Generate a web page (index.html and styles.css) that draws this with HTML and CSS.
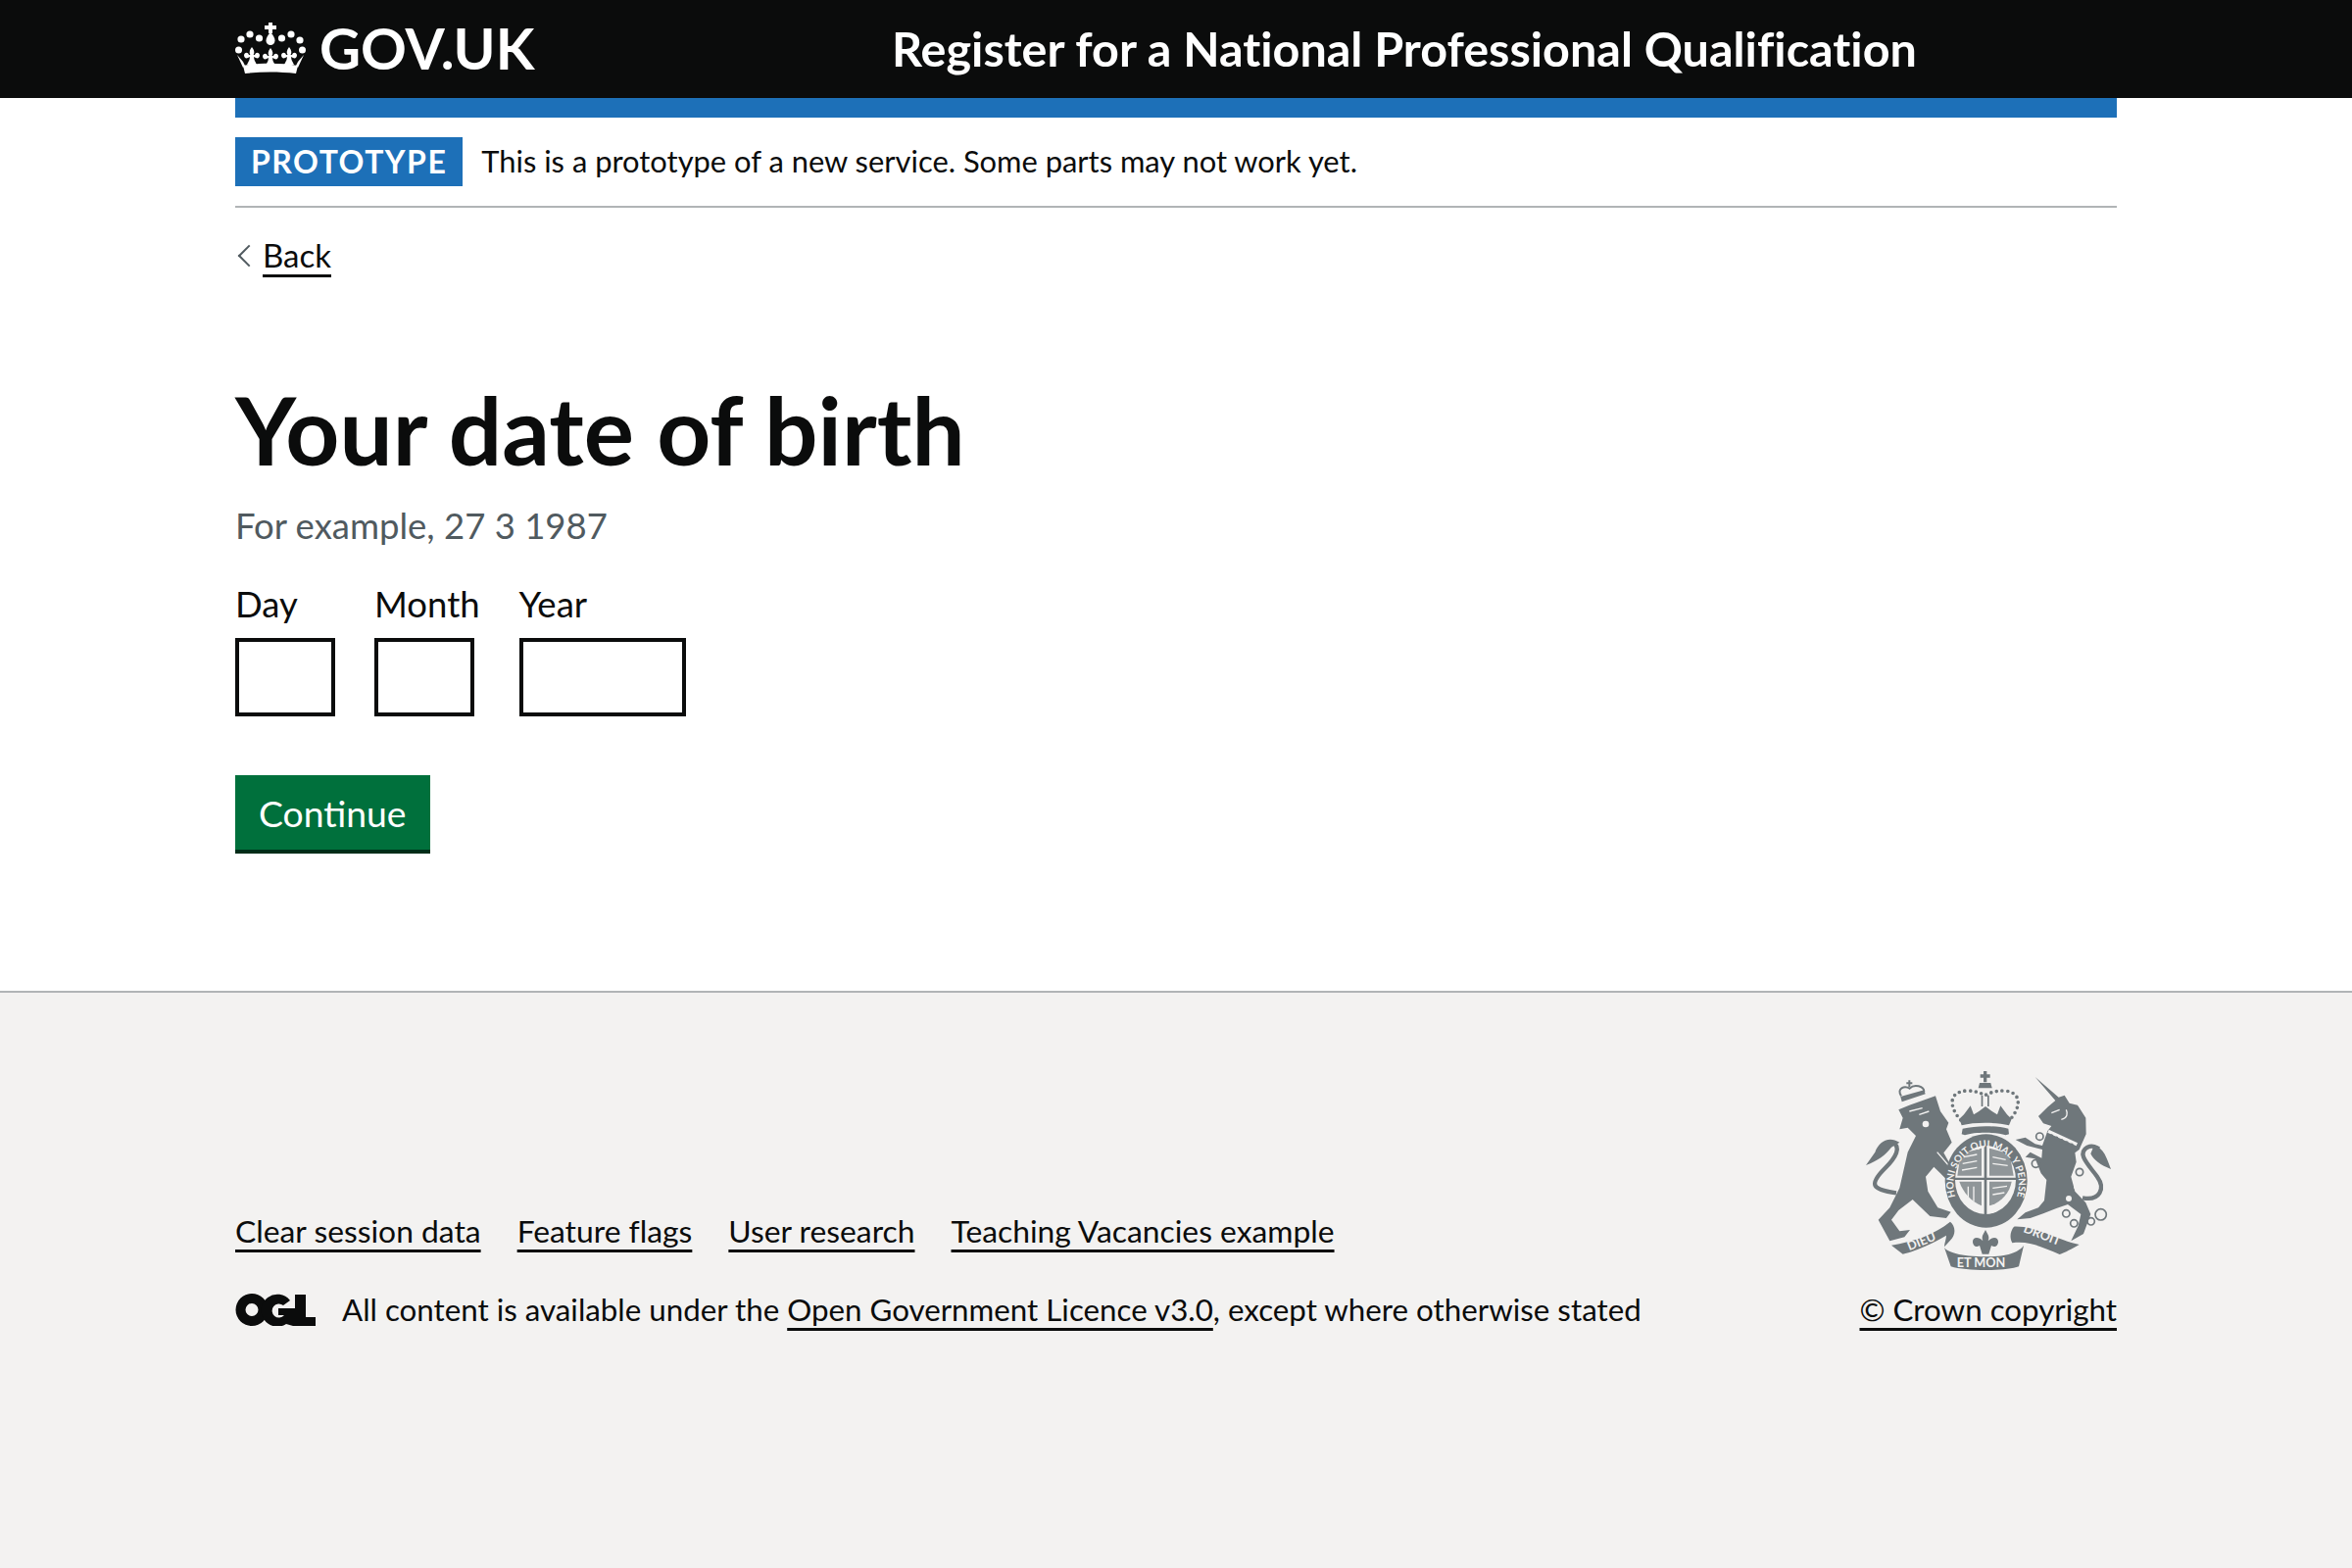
FILE: index.html
```html
<!DOCTYPE html>
<html lang="en">
<head>
    <meta charset="UTF-8">
    <meta name="viewport" content="width=device-width, initial-scale=1.0">
    <title>Your date of birth - Register for a National Professional Qualification</title>
    <link rel="stylesheet" href="styles.css">
</head>
<body>
    <header class="site-header">
        <div class="container header-inner">
            <a class="logo" href="#">
                <svg class="crown" viewBox="0 0 72 52" aria-hidden="true">
                    <path d="M34 0h4v3h4v4h-4v4h-4V7h-4V3h4z"/>
                    <path d="M36 10c3 3 4.500 6 4.500 8.500a4.500 4.500 0 0 1-9 0c0-2.500 1.500-5.500 4.500-8.500z"/>
                    <circle cx="6" cy="17" r="3.600"/><circle cx="15" cy="12" r="3.600"/><circle cx="24.500" cy="16" r="3.600"/>
                    <circle cx="47.500" cy="16" r="3.600"/><circle cx="57" cy="12" r="3.600"/><circle cx="66" cy="18" r="3.600"/>
                    <circle cx="3.500" cy="28" r="3.500"/><circle cx="68.500" cy="28" r="3.500"/>
                    <path transform="translate(17 34)" d="M0-9C2.500-6 3-3 1.500-1L3-1C4-4 7-4 8-1C8 2 6 3 4 2L2 1L2.500 4L5 9H-5L-2.500 4L-2 1L-4 2C-6 3-8 2-8-1C-7-4-4-4-3-1L-1.500-1C-3-3-2.500-6 0-9Z"/>
                    <path transform="translate(36 35)" d="M0-9C2.500-6 3-3 1.500-1L3-1C4-4 7-4 8-1C8 2 6 3 4 2L2 1L2.500 4L5 9H-5L-2.500 4L-2 1L-4 2C-6 3-8 2-8-1C-7-4-4-4-3-1L-1.500-1C-3-3-2.500-6 0-9Z"/>
                    <path transform="translate(55 34)" d="M0-9C2.500-6 3-3 1.500-1L3-1C4-4 7-4 8-1C8 2 6 3 4 2L2 1L2.500 4L5 9H-5L-2.500 4L-2 1L-4 2C-6 3-8 2-8-1C-7-4-4-4-3-1L-1.500-1C-3-3-2.500-6 0-9Z"/>
                    <path d="M2 33L8 40L10 44L8 46Z"/>
                    <path d="M70 33L64 40L62 44L64 46Z"/>
                    <path d="M8 44C25 41 47 41 64 44L62 52C45 50 27 50 10 52Z"/>
                </svg>
                <span>GOV.UK</span>
            </a>
            <a class="service-name" href="#">Register for a National Professional Qualification</a>
        </div>
    </header>

    <div class="container">
        <div class="header-stripe"></div>
        <div class="phase-banner">
            <strong class="tag">PROTOTYPE</strong>
            <span>This is a prototype of a new service. Some parts may not work yet.</span>
        </div>
        <a class="back-link" href="#">Back</a>

        <main class="main">
            <form>
                <h1>Your date of birth</h1>
                <div class="hint">For example, 27 3 1987</div>
                <div class="date-input">
                    <div class="date-item">
                        <label for="dob-day">Day</label>
                        <input class="input-2" type="text" id="dob-day" name="dob-day">
                    </div>
                    <div class="date-item">
                        <label for="dob-month">Month</label>
                        <input class="input-2" type="text" id="dob-month" name="dob-month">
                    </div>
                    <div class="date-item">
                        <label for="dob-year">Year</label>
                        <input class="input-4" type="text" id="dob-year" name="dob-year">
                    </div>
                </div>
                <button class="button" type="submit">Continue</button>
            </form>
        </main>
    </div>

    <footer class="footer">
        <div class="container footer-inner">
            <div class="footer-meta">
                <ul class="footer-links">
                    <li><a href="#">Clear session data</a></li>
                    <li><a href="#">Feature flags</a></li>
                    <li><a href="#">User research</a></li>
                    <li><a href="#">Teaching Vacancies example</a></li>
                </ul>
                <div class="licence">
                    <svg class="ogl" viewBox="0 0 82 33" aria-hidden="true">
                        <path fill-rule="evenodd" d="M17 0a16.500 16.500 0 1 1 0 33a16.500 16.500 0 0 1 0-33zM17 10a6.500 6.500 0 1 0 0 13a6.500 6.500 0 0 0 0-13z"/>
                        <path d="M56 7A16.500 16.500 0 1 0 52 31L59 33H61V15H44V22H50A7 7 0 1 1 49 12Z"/>
                        <path d="M61 1H72V24H82V33H61Z"/>
                    </svg>
                    <span>All content is available under the <a href="#">Open Government Licence v3.0</a>, except where otherwise stated</span>
                </div>
            </div>
            <div class="copyright">
                <svg class="crest" viewBox="60 60 780 630" aria-hidden="true">
                    <!-- lion -->
                    <path d="M172 190L205 176L285 148L300 195L325 230L318 250L335 290L310 322L345 385L345 420L325 410L300 385L280 365L255 395L262 440L292 490L332 503L318 522L268 516L215 465L172 498L150 527L175 562L207 558L190 580L145 592L110 527L145 490L175 430L200 320L225 270L200 245L175 250L185 215Z"/>
                    <path class="crest-line" d="M165 445C90 435 80 420 130 370C165 335 180 305 155 290"/>
                    <path d="M175 290C140 268 110 290 100 320L72 360C110 345 130 330 150 305Z"/>
                    <path class="crest-bg-line" d="M205 195L245 185M235 205L265 195M290 320L340 378"/>
                    <circle class="crest-cut" cx="255" cy="234" r="10"/>
                    <!-- lion crown -->
                    <path class="crest-thin" d="M180 148C165 125 190 115 206 125C220 110 250 118 250 135"/>
                    <path d="M178 150L250 130L254 142L182 166Z"/>
                    <path d="M202 100h6v6h6v6h-6v8h-6v-8h-6v-6h6z"/>
                    <!-- royal crown -->
                    <path d="M432 72h10v10h10v10h-10v14h-10V92h-10V82h10z"/>
                    <path d="M420 108h34l4 16h-42z"/>
                    <path class="crest-dots" d="M362 222C325 180 325 135 380 132c30 0 45 8 57 14c12-6 27-14 57-14c55 3 55 48 18 90"/>
                    <path d="M358 218L372 205L392 178L402 205L418 195L438 180L458 195L474 205L484 178L504 205L518 218L510 238C470 228 405 228 365 238Z"/>
                    <path d="M368 248C410 238 468 238 508 248L510 265L500 268C470 258 405 258 375 268L365 265Z"/>
                    <rect x="425" y="146" width="5" height="34"/><rect x="444" y="146" width="5" height="34"/>
                    <!-- shield and garter -->
                    <ellipse cx="440" cy="408" rx="126" ry="143"/>
                    <ellipse class="crest-bg" cx="438" cy="405" rx="93" ry="105"/>
                    <path d="M345 398H532V405H345Z"/>
                    <path d="M434 300H442V510H434Z"/>
                    <g class="crest-quarters">
                        <path d="M362 325L426 308V392H352Z"/>
                        <path d="M450 308L512 325L524 392H450Z"/>
                        <path d="M358 410H426V484C395 470 370 445 358 410Z"/>
                        <path d="M450 410H518C512 445 485 475 450 484Z"/>
                    </g>
                    <path class="crest-bg-line" d="M372 335L412 327M368 355L412 347M366 375L412 367M460 335L500 343M460 355L506 361M460 430L504 424M460 450L496 444M385 425V460M402 425V470"/>
                    <path id="garter-arc" class="crest-none" d="M368 495A100 112 0 1 1 512 495"/>
                    <text class="crest-text garter-text"><textPath href="#garter-arc" startOffset="50%">HONI SOIT QUI MAL Y PENSE</textPath></text>
                    <!-- unicorn -->
                    <path d="M590 90L662 152L680 146L695 170L720 176L745 215L746 265L725 312L712 322L716 350L700 395L712 440L745 475L760 510L738 570L700 592L722 545L730 510L690 480L655 492L615 508L575 522L535 526L560 505L600 490L618 468L625 405L608 385L590 340L560 335L575 320L610 338L612 312L565 300L530 282L560 275L590 295L612 300L628 255L640 240L615 232L600 210L628 182L652 162Z"/>
                    <path class="crest-band" d="M630 256L718 296"/>
                    <path class="crest-dots" d="M640 270L710 302"/>
                    <path class="crest-bg-line" d="M640 200L665 190M670 220C690 215 690 200 685 190"/>
                    <path class="crest-line" d="M735 460C790 470 805 430 780 395C755 360 715 325 750 305C765 298 780 305 785 310"/>
                    <path d="M770 300C800 305 810 340 822 372C790 360 770 345 760 325Z"/>
                    <circle class="crest-ring" cx="604" cy="272" r="11"/><circle class="crest-ring" cx="592" cy="355" r="12"/>
                    <circle class="crest-ring" cx="726" cy="381" r="11"/><circle class="crest-cut" cx="717" cy="425" r="9"/><circle class="crest-cut" cx="693" cy="462" r="9"/>
                    <circle class="crest-ring" cx="685" cy="508" r="11"/><circle class="crest-ring" cx="709" cy="538" r="11"/><circle class="crest-ring" cx="761" cy="532" r="11"/><circle class="crest-ring" cx="791" cy="511" r="17"/>
                    <!-- motto scroll -->
                    <path d="M150 605C215 595 285 570 330 533C345 545 350 570 330 590L312 610C312 600 318 585 318 575C275 600 220 625 185 632Z"/>
                    <path d="M525 548C590 545 660 590 725 603C705 615 680 628 665 633C620 615 575 590 520 598C510 580 515 560 525 548Z"/>
                    <path d="M312 612C320 625 360 640 440 640C510 640 540 625 555 606L540 670C500 685 380 685 332 670Z"/>
                    <path d="M438 558C444 572 452 576 446 592C460 576 482 580 476 600C472 612 462 610 456 606L448 632H428L420 606C414 610 404 612 400 600C394 580 416 576 430 592C424 576 432 572 438 558Z"/>
                    <text class="crest-text motto" x="205" y="622" transform="rotate(-22 205 622)">DIEU</text>
                    <text class="crest-text motto" x="350" y="672">ET MON</text>
                    <text class="crest-text motto" x="552" y="564" transform="rotate(21 552 564)">DROIT</text>
                </svg>
                <a href="#">© Crown copyright</a>
            </div>
        </div>
    </footer>
</body>
</html>
```

FILE: styles.css
```css
html, body {
    margin: 0;
    padding: 0;
}

body {
    display: flex;
    flex-direction: column;
    min-height: 100vh;
    font-family: Lato, "Noto Sans", Arial, sans-serif;
    font-size: 36px;
    line-height: 50px;
    font-variant-ligatures: none;
    color: #0b0c0c;
    background-color: #fff;
}

a {
    color: #0b0c0c;
    text-decoration: underline;
    text-decoration-thickness: 3px;
    text-underline-offset: 7px;
}

.container {
    width: 1920px;
    margin: 0 auto;
}

/* Header */
.site-header {
    height: 100px;
    background-color: #0b0c0c;
}

.header-inner {
    display: flex;
    align-items: center;
    height: 100%;
}

.logo {
    display: flex;
    align-items: center;
    gap: 14px;
    width: 670px;
    margin-bottom: 3px;
    color: #fff;
    font-size: 58px;
    font-weight: 700;
    text-decoration: none;
}

.crown {
    width: 72px;
    height: 52px;
    fill: #fff;
}

.service-name {
    margin-bottom: 3px;
    color: #fff;
    font-size: 48.500px;
    font-weight: 700;
    text-decoration: none;
}

.header-stripe {
    height: 20px;
    background-color: #1d70b8;
}

/* Phase banner */
.phase-banner {
    display: flex;
    align-items: center;
    gap: 19px;
    padding: 20px 0;
    border-bottom: 2px solid #b1b4b6;
    font-size: 30.900px;
}

.tag {
    display: block;
    height: 50px;
    padding: 0 16px;
    line-height: 50px;
    font-size: 32px;
    letter-spacing: 1.500px;
    color: #fff;
    background-color: #1d70b8;
}

.back-link {
    display: inline-block;
    position: relative;
    margin-top: 23px;
    padding-left: 28px;
    font-size: 33px;
}

.back-link::before {
    content: "";
    position: absolute;
    left: 6px;
    top: 18px;
    width: 14px;
    height: 14px;
    border-left: 2px solid #505a5f;
    border-bottom: 2px solid #505a5f;
    transform: rotate(45deg);
}

/* Form */
.main {
    padding-top: 103px;
    padding-bottom: 144px;
}

h1 {
    margin: 0 0 23px;
    font-size: 96px;
    line-height: 100px;
    font-weight: 700;
}

.hint {
    margin-bottom: 30px;
    font-size: 36.500px;
    color: #505a5f;
}

.date-input {
    display: flex;
    gap: 40px;
    margin-bottom: 60px;
}

.date-item label {
    display: block;
    margin-bottom: 10px;
    font-size: 36.500px;
}

.date-item input {
    display: block;
    box-sizing: border-box;
    height: 80px;
    border: 4px solid #0b0c0c;
    border-radius: 0;
    padding: 10px;
    font-size: 36px;
    background: #fff;
}

.input-2 {
    width: 102px;
}

.input-4 {
    width: 170px;
}

.button {
    display: block;
    height: 76px;
    padding: 0 24px;
    border: none;
    border-radius: 0;
    box-shadow: 0 4px 0 #002d18;
    font-family: inherit;
    font-size: 37.300px;
    color: #fff;
    background-color: #00703c;
    cursor: pointer;
}

/* Footer */
.footer {
    flex: 1;
    border-top: 2px solid #b1b4b6;
    background-color: #f3f2f1;
    font-size: 31.300px;
}

.footer-inner {
    display: flex;
    justify-content: space-between;
    align-items: flex-start;
    padding-top: 76px;
}

.footer-meta {
    padding-top: 142px;
}

.footer-links {
    display: flex;
    gap: 37px;
    margin: 0 0 30px;
    padding: 0;
    list-style: none;
    font-size: 31.800px;
}

.licence {
    display: flex;
    align-items: center;
    gap: 27px;
}

.ogl {
    width: 82px;
    height: 33px;
    fill: #0b0c0c;
}

.copyright {
    display: flex;
    flex-direction: column;
    align-items: flex-end;
    white-space: nowrap;
}

.crest {
    display: block;
    width: 260px;
    height: 210px;
    margin-bottom: 12px;
    fill: #6f777b;
}

.crest-bg {
    fill: #f3f2f1;
}

.crest-cut {
    fill: #f3f2f1;
}

.crest-none {
    fill: none;
}

.crest-quarters {
    fill-opacity: 0.75;
}

.crest-line {
    fill: none;
    stroke: #6f777b;
    stroke-width: 13;
}

.crest-thin {
    fill: none;
    stroke: #6f777b;
    stroke-width: 6;
}

.crest-dots {
    fill: none;
    stroke: #6f777b;
    stroke-width: 11;
    stroke-linecap: round;
    stroke-dasharray: 0 17;
}

.crest-band {
    fill: none;
    stroke: #f3f2f1;
    stroke-width: 10;
}

.crest-ring {
    fill: none;
    stroke: #6f777b;
    stroke-width: 5;
}

.crest-bg-line {
    fill: none;
    stroke: #f3f2f1;
    stroke-width: 4;
}

.crest-text {
    fill: #f3f2f1;
    font-weight: 700;
}

.garter-text {
    font-size: 30px;
    text-anchor: middle;
}

.motto {
    font-size: 38px;
}
```
